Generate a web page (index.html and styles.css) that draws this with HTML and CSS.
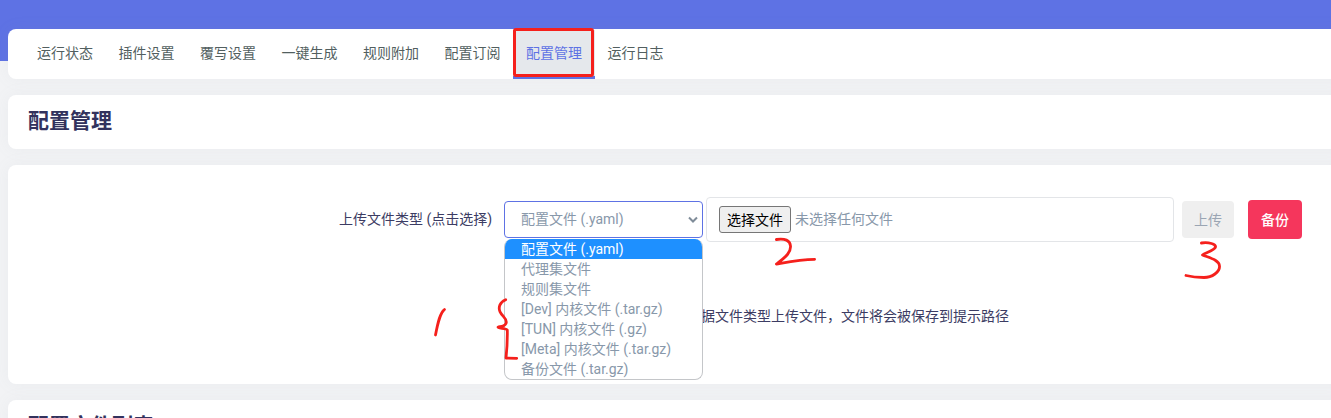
FILE: index.html
```html
<!DOCTYPE html>
<html lang="zh-CN">
<head>
<meta charset="utf-8">
<title>配置管理</title>
<link rel="stylesheet" href="styles.css">
</head>
<body>
<div class="band"></div>
<main class="page">
  <nav class="card tabs">
    <a class="tab">运行状态</a>
    <a class="tab">插件设置</a>
    <a class="tab">覆写设置</a>
    <a class="tab">一键生成</a>
    <a class="tab">规则附加</a>
    <a class="tab">配置订阅</a>
    <a class="tab active">配置管理</a>
    <a class="tab">运行日志</a>
  </nav>
  <section class="card title-card"><h2 class="title">配置管理</h2></section>
  <section class="card form-card">
    <div class="form-row">
      <label class="form-label">上传文件类型 (点击选择)</label>
      <div class="select-wrap">
        <div class="select">
          <span class="select-value">配置文件 (.yaml)</span>
          <svg class="chevron" width="10" height="7" viewBox="0 0 10 7"><path d="M1 1.5 5 5.5 9 1.5" fill="none" stroke="#7f8c99" stroke-width="2"/></svg>
        </div>
        <ul class="options">
          <li class="option selected">配置文件 (.yaml)</li>
          <li class="option">代理集文件</li>
          <li class="option">规则集文件</li>
          <li class="option">[Dev] 内核文件 (.tar.gz)</li>
          <li class="option">[TUN] 内核文件 (.gz)</li>
          <li class="option">[Meta] 内核文件 (.tar.gz)</li>
          <li class="option">备份文件 (.tar.gz)</li>
        </ul>
      </div>
      <div class="file-box">
        <button class="file-btn" type="button">选择文件</button>
        <span class="file-name">未选择任何文件</span>
      </div>
      <button class="btn upload" type="button">上传</button>
      <button class="btn backup" type="button">备份</button>
    </div>
    <p class="hint">根据文件类型上传文件，文件将会被保存到提示路径</p>
  </section>
  <section class="card title-card"><h2 class="title">配置文件列表</h2></section>
</main>
<div class="red-box"></div>
<svg class="marks" width="1331" height="418" viewBox="0 0 1331 418">
  <path d="M444.5 309.5C440 313 438 322 435.5 335"/>
  <path d="M505.7 299.7C500 302 498 307 500 311.7S508 319 506 323.3 498 326 498 327.3 507.3 328 507.3 330 507.7 342 506 358L516.7 358.3"/>
  <path d="M776.4 239.5C785 238.5 790 240 790.5 246S787 256 776.4 264C785 262.5 800 259.3 814.6 259.3"/>
  <path d="M1201.4 243C1209 242 1216 244 1215.5 247S1205 253 1202.5 255C1210 258 1219 260 1219.5 266S1212 277.5 1204 277.5 1192 277 1186 275.5"/>
</svg>
</body>
</html>
```
FILE: styles.css
```css
* { box-sizing: border-box; }
html, body { margin: 0; height: 418px; overflow: hidden; }
body {
  background: #f2f3f5;
  font-family: Roboto, "Noto Sans CJK SC", sans-serif;
  font-size: 14px;
  color: #3c3c63;
  position: relative;
}
.band { height: 61px; background: #5e72e4; }
.page {
  margin: -32px -14px 0 8px;
  display: flex;
  flex-direction: column;
  gap: 16px;
}
.card {
  background: #fff;
  border-radius: 8px;
  box-shadow: 0 0 16px rgba(136, 152, 170, .08);
}
.tabs {
  height: 50px;
  display: flex;
  padding-left: 16.25px;
  padding-top: 1px;
}
.tab {
  width: 81.5px;
  height: 47px;
  display: flex;
  align-items: center;
  justify-content: center;
  color: #525f5f;
  white-space: nowrap;
  border-bottom: 3px solid transparent;
}
.tab.active {
  background: #e5e8ec;
  color: #5e72e4;
  border-bottom-color: #5e72e4;
  height: 49px;
  padding-bottom: 2px;
}
.title-card { height: 54px; padding: 0 20px 2px; display: flex; align-items: center; }
.title { margin: 0; font-size: 21px; line-height: 1; font-weight: 700; color: #32325d; }
.form-card { height: 219px; padding-top: 32px; }
.form-row { display: flex; align-items: center; height: 45px; padding-left: 331px; }
.form-label { width: 151px; white-space: nowrap; padding-bottom: 3px; }
.select-wrap { position: relative; width: 199px; margin-left: 14px; }
.select {
  height: 37px;
  border: 1px solid #5e72e4;
  border-radius: 4px;
  padding: 0 4px 0 16px;
  display: flex;
  align-items: center;
  justify-content: space-between;
  color: #8898aa;
  background: #fff;
}
.select-value { padding-bottom: 3px; }
.options {
  position: absolute;
  top: 37.5px;
  left: 0;
  width: 199px;
  margin: 0;
  padding: 0;
  list-style: none;
  background: #fff;
  border: 1px solid #c4c6c9;
  border-top: 0;
  border-radius: 8px;
  overflow: hidden;
  z-index: 2;
}
.option { height: 20px; line-height: 20px; padding-left: 16px; color: #8898aa; white-space: nowrap; }
.option.selected { background: #1e90ff; color: #fff; }
.file-box {
  width: 468px;
  height: 45px;
  margin-left: 3px;
  border: 1px solid #e3e5e8;
  border-radius: 4px;
  display: flex;
  align-items: center;
  padding-left: 12px;
  background: #fff;
}
.file-btn {
  width: 72px;
  height: 27px;
  padding: 0 0 2px;
  font: inherit;
  color: #000;
  background: #efefef;
  border: 1px solid #767676;
  border-radius: 3px;
}
.file-name { margin-left: 4px; color: #8898aa; padding-bottom: 3px; }
.btn { border: 0; border-radius: 4px; padding: 0; font: inherit; }
.upload { width: 52px; height: 37px; margin-left: 8px; padding-bottom: 2px; background: #efefef; color: #9aa5b3; }
.backup {
  width: 54px;
  height: 39px;
  margin-left: 14px;
  padding-bottom: 2px;
  background: #f5365c;
  color: #fff;
  font-weight: 500;
}
.hint { margin: 64px 0 0; padding-left: 679px; line-height: 20px; white-space: nowrap; }
.red-box {
  position: absolute;
  left: 513px;
  top: 28px;
  width: 81px;
  height: 49px;
  border: 3px solid #f5201c;
  border-radius: 3px;
}
.marks { position: absolute; left: 0; top: 0; z-index: 3; pointer-events: none; }
.marks path {
  fill: none;
  stroke: #f5201c;
  stroke-width: 2.8;
  stroke-linecap: round;
  stroke-linejoin: round;
}
```
